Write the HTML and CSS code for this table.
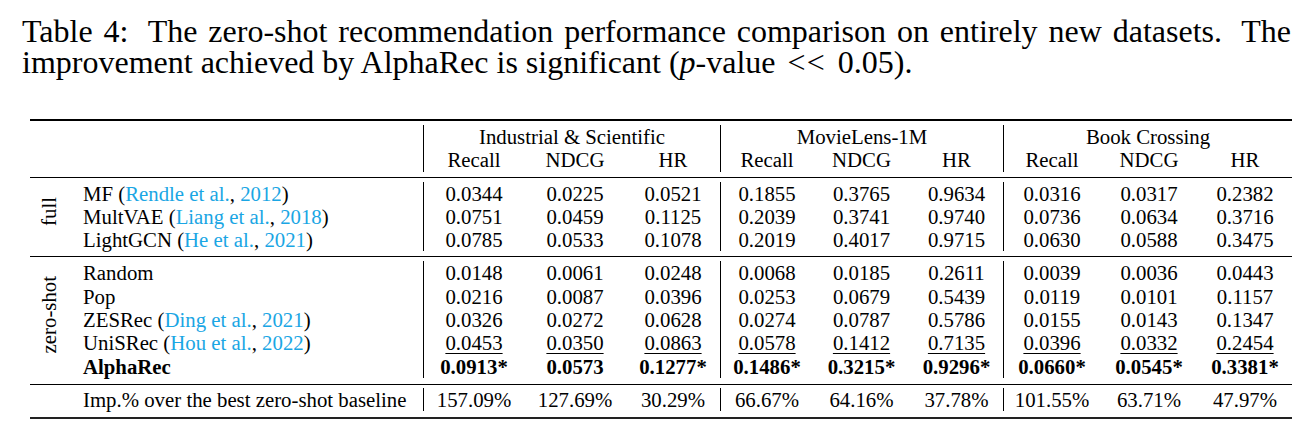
FILE: index.html
```html
<!DOCTYPE html>
<html>
<head>
<meta charset="utf-8">
<title>Table 4</title>
<link rel="stylesheet" href="styles.css">
</head>
<body>
<div class="page">
  <p class="caption">
    <span class="line1">Table <span class="sent">4:</span> The zero-shot recommendation performance comparison on entirely new <span class="sent">datasets.</span> The</span>
    <span class="line2">improvement achieved by AlphaRec is significant (<i>p</i>-value <span class="rel">&lt;&lt;</span> 0.05).</span>
  </p>

  <div class="table">
    <div class="rule rule-top"></div>

    <div class="sec sec-head grid">
      <div class="blank"></div>
      <div class="grp vl">Industrial &amp; Scientific</div>
      <div class="grp vl">MovieLens-1M</div>
      <div class="grp vl">Book Crossing</div>
      <div class="c vl">Recall</div><div class="c">NDCG</div><div class="c">HR</div>
      <div class="c vl">Recall</div><div class="c">NDCG</div><div class="c">HR</div>
      <div class="c vl">Recall</div><div class="c">NDCG</div><div class="c">HR</div>
    </div>

    <div class="rule rule-mid"></div>

    <div class="sec sec-full grid">
      <div class="lab lab-full">full</div>
      <div class="name">MF (<span class="cite">Rendle et al.</span>, <span class="cite">2012</span>)</div>
      <div class="c vl">0.0344</div><div class="c">0.0225</div><div class="c">0.0521</div>
      <div class="c vl">0.1855</div><div class="c">0.3765</div><div class="c">0.9634</div>
      <div class="c vl">0.0316</div><div class="c">0.0317</div><div class="c">0.2382</div>

      <div class="name">MultVAE (<span class="cite">Liang et al.</span>, <span class="cite">2018</span>)</div>
      <div class="c vl">0.0751</div><div class="c">0.0459</div><div class="c">0.1125</div>
      <div class="c vl">0.2039</div><div class="c">0.3741</div><div class="c">0.9740</div>
      <div class="c vl">0.0736</div><div class="c">0.0634</div><div class="c">0.3716</div>

      <div class="name">LightGCN (<span class="cite">He et al.</span>, <span class="cite">2021</span>)</div>
      <div class="c vl">0.0785</div><div class="c">0.0533</div><div class="c">0.1078</div>
      <div class="c vl">0.2019</div><div class="c">0.4017</div><div class="c">0.9715</div>
      <div class="c vl">0.0630</div><div class="c">0.0588</div><div class="c">0.3475</div>
    </div>

    <div class="rule rule-mid"></div>

    <div class="sec sec-zero grid">
      <div class="lab lab-zero">zero-shot</div>
      <div class="name">Random</div>
      <div class="c vl">0.0148</div><div class="c">0.0061</div><div class="c">0.0248</div>
      <div class="c vl">0.0068</div><div class="c">0.0185</div><div class="c">0.2611</div>
      <div class="c vl">0.0039</div><div class="c">0.0036</div><div class="c">0.0443</div>

      <div class="name">Pop</div>
      <div class="c vl">0.0216</div><div class="c">0.0087</div><div class="c">0.0396</div>
      <div class="c vl">0.0253</div><div class="c">0.0679</div><div class="c">0.5439</div>
      <div class="c vl">0.0119</div><div class="c">0.0101</div><div class="c">0.1157</div>

      <div class="name">ZESRec (<span class="cite">Ding et al.</span>, <span class="cite">2021</span>)</div>
      <div class="c vl">0.0326</div><div class="c">0.0272</div><div class="c">0.0628</div>
      <div class="c vl">0.0274</div><div class="c">0.0787</div><div class="c">0.5786</div>
      <div class="c vl">0.0155</div><div class="c">0.0143</div><div class="c">0.1347</div>

      <div class="name">UniSRec (<span class="cite">Hou et al.</span>, <span class="cite">2022</span>)</div>
      <div class="c vl"><u>0.0453</u></div><div class="c"><u>0.0350</u></div><div class="c"><u>0.0863</u></div>
      <div class="c vl"><u>0.0578</u></div><div class="c"><u>0.1412</u></div><div class="c"><u>0.7135</u></div>
      <div class="c vl"><u>0.0396</u></div><div class="c"><u>0.0332</u></div><div class="c"><u>0.2454</u></div>

      <div class="name bold">AlphaRec</div>
      <div class="c vl bold">0.0913*</div><div class="c bold">0.0573</div><div class="c bold">0.1277*</div>
      <div class="c vl bold">0.1486*</div><div class="c bold">0.3215*</div><div class="c bold">0.9296*</div>
      <div class="c vl bold">0.0660*</div><div class="c bold">0.0545*</div><div class="c bold">0.3381*</div>
    </div>

    <div class="rule rule-mid"></div>

    <div class="sec sec-imp grid">
      <div class="blank-one"></div>
      <div class="name">Imp.% over the best zero-shot baseline</div>
      <div class="c vl">157.09%</div><div class="c">127.69%</div><div class="c">30.29%</div>
      <div class="c vl">66.67%</div><div class="c">64.16%</div><div class="c">37.78%</div>
      <div class="c vl">101.55%</div><div class="c">63.71%</div><div class="c">47.97%</div>
    </div>

    <div class="rule rule-bottom"></div>
  </div>
</div>
</body>
</html>
```

FILE: styles.css
```css
html, body {
  margin: 0;
  padding: 0;
  background: #ffffff;
}

body {
  font-family: "Liberation Serif", "Times New Roman", serif;
  color: #000000;
}

.page {
  width: 1300px;
  height: 428px;
  overflow: hidden;
}

/* ---------- caption ---------- */
.caption {
  margin: 16px 0 0 22px;
  width: 1269px;
  font-size: 32px;
  line-height: 31px;
}

.caption .line1 {
  display: block;
  text-align: justify;
  text-align-last: justify;
}

.caption .line2 {
  display: block;
}

.caption .sent {
  margin-right: 0.28em;
}

.caption .rel {
  margin: 0 0.12em;
  letter-spacing: 0.04em;
}

/* ---------- table ---------- */
.table {
  margin: 41px 0 0 30px;
  width: 1262px;
  font-size: 20.8px;
}

.rule {
  background: #000000;
}

.rule-top {
  height: 2px;
}

.rule-mid {
  height: 1px;
}

.rule-bottom {
  height: 2px;
  background: #222222;
}

.grid {
  display: grid;
  grid-template-columns: 40px 353px 101px 102px 94px 93px 97px 93px 97px 98px 94px;
  grid-auto-rows: 23.3px;
  line-height: 23.3px;
}

.sec-head {
  padding: 4px 0 5px;
}

.sec-full {
  padding: 4px 0 5px;
}

.sec-zero {
  padding: 4px 0 6px;
}

.sec-imp {
  padding: 3px 0 6px;
}

.blank {
  grid-column: 1 / 3;
  grid-row: 1 / 3;
}

.blank-one {
  grid-column: 1;
}

.grp {
  grid-column: span 3;
  text-align: center;
}

.c {
  text-align: center;
  white-space: nowrap;
}

.vl {
  border-left: 1px solid #000000;
}

.name {
  grid-column: 2;
  padding-left: 13px;
  white-space: nowrap;
}

.cite {
  color: #1aa6e4;
}

.bold {
  font-weight: bold;
}

u {
  text-decoration: underline;
  text-decoration-thickness: 1px;
  text-underline-offset: 3px;
}

.lab {
  grid-column: 1;
  grid-row-start: 1;
  writing-mode: vertical-rl;
  transform: rotate(180deg);
  align-self: center;
  justify-self: center;
  line-height: 22px;
  white-space: nowrap;
  margin-right: 3px;
}

.lab-full {
  grid-row-end: span 3;
  margin-bottom: 11px;
}

.lab-zero {
  grid-row-end: span 5;
  margin-bottom: 10px;
}
```
